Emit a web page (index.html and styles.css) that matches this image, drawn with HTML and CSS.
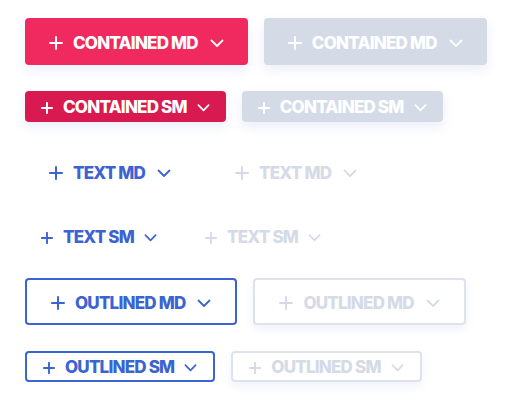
FILE: index.html
```html
<!DOCTYPE html>
<html lang="en">
<head>
<meta charset="utf-8">
<title>Buttons</title>
<link rel="stylesheet" href="styles.css">
</head>
<body>
<div class="rows">
  <div class="row">
    <button class="btn md contained"><svg class="plus" viewBox="0 0 14 14"><path d="M7 1v12M1 7h12"/></svg><span>CONTAINED MD</span><svg class="chev" viewBox="0 0 14 14"><path d="M1.5 4.5L7 10l5.5-5.5"/></svg></button>
    <button class="btn md contained disabled"><svg class="plus" viewBox="0 0 14 14"><path d="M7 1v12M1 7h12"/></svg><span>CONTAINED MD</span><svg class="chev" viewBox="0 0 14 14"><path d="M1.5 4.5L7 10l5.5-5.5"/></svg></button>
  </div>
  <div class="row">
    <button class="btn sm contained pressed"><svg class="plus" viewBox="0 0 14 14"><path d="M7 1v12M1 7h12"/></svg><span>CONTAINED SM</span><svg class="chev" viewBox="0 0 14 14"><path d="M1.5 4.5L7 10l5.5-5.5"/></svg></button>
    <button class="btn sm contained disabled"><svg class="plus" viewBox="0 0 14 14"><path d="M7 1v12M1 7h12"/></svg><span>CONTAINED SM</span><svg class="chev" viewBox="0 0 14 14"><path d="M1.5 4.5L7 10l5.5-5.5"/></svg></button>
  </div>
  <div class="row">
    <button class="btn md text"><svg class="plus" viewBox="0 0 14 14"><path d="M7 1v12M1 7h12"/></svg><span>TEXT MD</span><svg class="chev" viewBox="0 0 14 14"><path d="M1.5 4.5L7 10l5.5-5.5"/></svg></button>
    <button class="btn md text disabled"><svg class="plus" viewBox="0 0 14 14"><path d="M7 1v12M1 7h12"/></svg><span>TEXT MD</span><svg class="chev" viewBox="0 0 14 14"><path d="M1.5 4.5L7 10l5.5-5.5"/></svg></button>
  </div>
  <div class="row">
    <button class="btn sm text"><svg class="plus" viewBox="0 0 14 14"><path d="M7 1v12M1 7h12"/></svg><span>TEXT SM</span><svg class="chev" viewBox="0 0 14 14"><path d="M1.5 4.5L7 10l5.5-5.5"/></svg></button>
    <button class="btn sm text disabled"><svg class="plus" viewBox="0 0 14 14"><path d="M7 1v12M1 7h12"/></svg><span>TEXT SM</span><svg class="chev" viewBox="0 0 14 14"><path d="M1.5 4.5L7 10l5.5-5.5"/></svg></button>
  </div>
  <div class="row">
    <button class="btn md outlined"><svg class="plus" viewBox="0 0 14 14"><path d="M7 1v12M1 7h12"/></svg><span>OUTLINED MD</span><svg class="chev" viewBox="0 0 14 14"><path d="M1.5 4.5L7 10l5.5-5.5"/></svg></button>
    <button class="btn md outlined disabled"><svg class="plus" viewBox="0 0 14 14"><path d="M7 1v12M1 7h12"/></svg><span>OUTLINED MD</span><svg class="chev" viewBox="0 0 14 14"><path d="M1.5 4.5L7 10l5.5-5.5"/></svg></button>
  </div>
  <div class="row">
    <button class="btn sm outlined"><svg class="plus" viewBox="0 0 14 14"><path d="M7 1v12M1 7h12"/></svg><span>OUTLINED SM</span><svg class="chev" viewBox="0 0 14 14"><path d="M1.5 4.5L7 10l5.5-5.5"/></svg></button>
    <button class="btn sm outlined disabled"><svg class="plus" viewBox="0 0 14 14"><path d="M7 1v12M1 7h12"/></svg><span>OUTLINED SM</span><svg class="chev" viewBox="0 0 14 14"><path d="M1.5 4.5L7 10l5.5-5.5"/></svg></button>
  </div>
</div>
</body>
</html>
```
FILE: styles.css
```css
html, body {
  margin: 0;
  padding: 0;
  background: #ffffff;
}
body {
  padding: 18px 25px;
  font-family: Inter, "Open Sans", sans-serif;
}
.rows {
  display: flex;
  flex-direction: column;
  gap: 26px;
}
.row {
  display: flex;
  gap: 16px;
  align-items: center;
}
.btn {
  display: inline-flex;
  align-items: center;
  box-sizing: border-box;
  border: none;
  background: transparent;
  font-family: inherit;
  font-weight: 800;
  font-size: 17px;
  letter-spacing: -0.8px;
  border-radius: 4px;
  white-space: nowrap;
  cursor: pointer;
}
.btn span {
  line-height: 1;
}
.btn svg {
  fill: none;
  stroke: currentColor;
  stroke-linecap: round;
  stroke-linejoin: round;
  flex: none;
}
.btn.md {
  height: 47px;
  padding: 3px 24px 0;
}
.btn.md .plus {
  width: 14px;
  height: 14px;
  stroke-width: 2;
  margin-right: 10px;
}
.btn.md .chev {
  width: 14px;
  height: 14px;
  stroke-width: 1.8;
  margin-left: 12px;
}
.btn.sm {
  height: 31px;
  padding: 2px 16px 0;
}
.btn.sm .plus {
  width: 12px;
  height: 12px;
  stroke-width: 2.2;
  margin-right: 10px;
}
.btn.sm .chev {
  width: 13px;
  height: 13px;
  stroke-width: 1.8;
  margin-left: 10px;
}
.contained {
  background: #f0295f;
  color: #ffffff;
  box-shadow: 0 5px 12px rgba(70, 90, 200, 0.1);
}
.contained.pressed {
  background: #d81a50;
}
.contained.disabled {
  background: #d5dbe6;
  color: #ffffff;
}
.text {
  color: #3b63d1;
}
.text.disabled {
  color: #d5dbe6;
}
.outlined {
  background: #ffffff;
  color: #3b63d1;
  border: 2px solid #3b63d1;
}
.outlined.disabled {
  color: #d5dbe6;
  border-color: #dde2ec;
  box-shadow: 0 4px 10px rgba(70, 90, 200, 0.08);
}
```
